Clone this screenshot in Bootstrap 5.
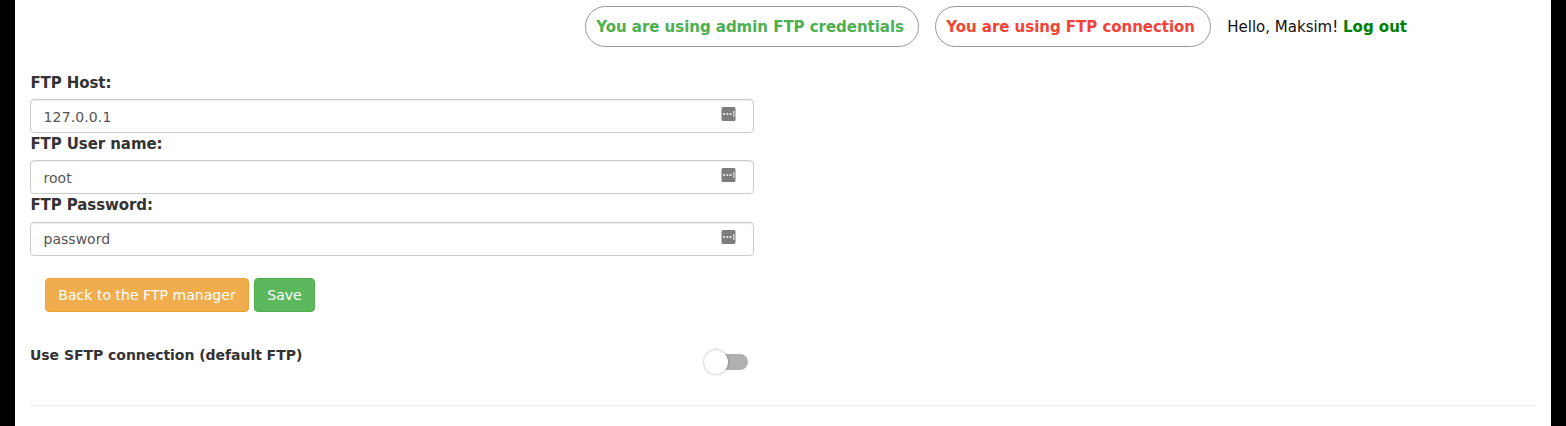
<!DOCTYPE html>
<html lang="en">
<head>
<meta charset="utf-8">
<title>FTP settings</title>
<link href="https://cdn.jsdelivr.net/npm/bootstrap@5.3.0/dist/css/bootstrap.min.css" rel="stylesheet">
<style>
body{background:#000;font-family:"DejaVu Sans",Verdana,sans-serif;font-size:15px;line-height:20px;color:#333;overflow:hidden}
.panel{width:1536px;height:426px;margin-left:15px;background:#fff;padding:6px 15px 0}
.topbar{height:41px;padding-right:129px;gap:16px;color:#111}
.pill{border:1px solid #999;border-radius:21px;height:41px;width:334px;padding:0 10px;font-weight:700;display:flex;align-items:center;color:#4caf50;letter-spacing:-.03px}
.pill.warn{width:276px;color:#f44336}
.topbar a{color:green;font-weight:700;text-decoration:none}
.fields{width:724px;margin-top:25px}
.fields label{display:block;font-weight:700;height:27.2px;line-height:22px;padding-left:.4px;letter-spacing:-.08px}
.field{position:relative;height:34px}
.field .form-control{height:34px;padding:1px 12px 0 12.6px;font-size:14px;color:#555;border:1px solid #ccc;border-radius:4px;box-shadow:inset 0 1px 1px rgba(0,0,0,.075)}
#h{letter-spacing:.12px}
.field svg{position:absolute;right:18px;top:8px}
.actions{margin:22.8px 0 0 15px;gap:5px}
.actions .btn{height:34px;font-size:14px;line-height:20px;padding:6px 12px;border-radius:4px;color:#fff}
.b-back{background:#f0ad4e;border-color:#eea236;width:204px;letter-spacing:.04px}
.b-save{background:#5cb85c;border-color:#4cae4c;width:61px}
.sftp{width:718px;margin-top:33px;font-weight:700;font-size:14px;letter-spacing:-.04px}
.toggle-track{position:relative;width:34px;height:16px;margin-top:8.5px;border-radius:8px;background:#b0b0b0}
.toggle-track::before{content:"";position:absolute;left:-10px;top:-4px;width:24px;height:24px;border-radius:50%;background:#fff;box-shadow:0 0 3px rgba(0,0,0,.35)}
.rule{border-top:1px solid #eee;margin-top:35px}
</style>
</head>
<body>
<main class="panel">
<div class="topbar d-flex align-items-center justify-content-end text-nowrap">
<div class="pill"><span>You are using admin FTP credentials</span></div>
<div class="pill warn"><span>You are using FTP connection</span></div>
<div><span>Hello, Maksim!</span> <a href="#">Log out</a></div>
</div>
<form class="fields">
<label for="h">FTP Host:</label>
<div class="field"><input id="h" class="form-control" value="127.0.0.1"><svg width="15" height="14" viewBox="0 0 15 14"><rect x=".5" width="14" height="14" rx="1.5" fill="#7d7d7d"/><path d="M2 6h2v2H2zM5.3 6h2v2h-2zM8.6 6h2v2h-2z" fill="#ddd"/><path d="M12 4h1.5v6H12z" fill="#ccc"/></svg></div>
<label for="u">FTP User name:</label>
<div class="field"><input id="u" class="form-control" value="root"><svg width="15" height="14" viewBox="0 0 15 14"><rect x=".5" width="14" height="14" rx="1.5" fill="#7d7d7d"/><path d="M2 6h2v2H2zM5.3 6h2v2h-2zM8.6 6h2v2h-2z" fill="#ddd"/><path d="M12 4h1.5v6H12z" fill="#ccc"/></svg></div>
<label for="p">FTP Password:</label>
<div class="field"><input id="p" class="form-control" value="password"><svg width="15" height="14" viewBox="0 0 15 14"><rect x=".5" width="14" height="14" rx="1.5" fill="#7d7d7d"/><path d="M2 6h2v2H2zM5.3 6h2v2h-2zM8.6 6h2v2h-2z" fill="#ddd"/><path d="M12 4h1.5v6H12z" fill="#ccc"/></svg></div>
<div class="actions d-flex text-nowrap"><button type="button" class="btn b-back">Back to the FTP manager</button><button type="button" class="btn b-save">Save</button></div>
</form>
<div class="sftp d-flex justify-content-between align-items-start"><span>Use SFTP connection (default FTP)</span><span class="toggle-track"></span></div>
<div class="rule"></div>
</main>
<script src="https://cdn.jsdelivr.net/npm/bootstrap@5.3.0/dist/js/bootstrap.bundle.min.js"></script>
</body>
</html>
